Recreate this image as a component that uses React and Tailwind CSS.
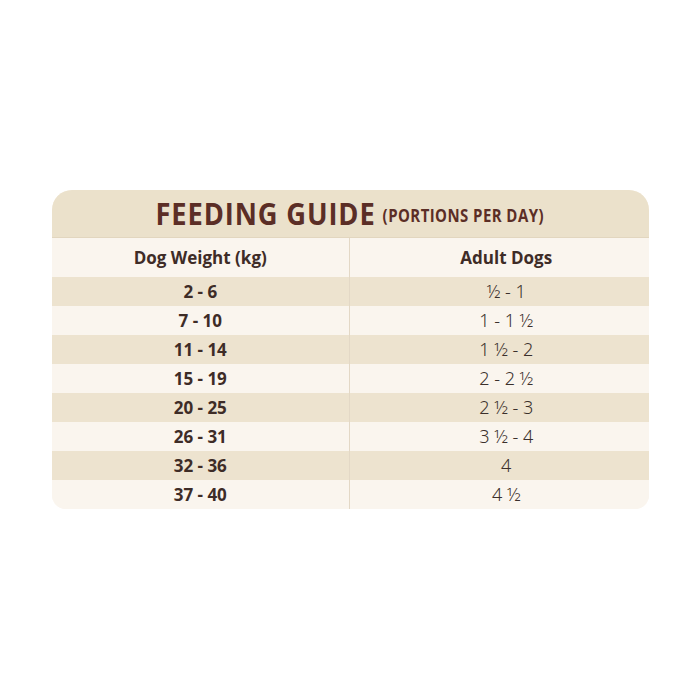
import React from 'react';

const ROWS = [
  ['2 - 6', '½ - 1'],
  ['7 - 10', '1 - 1 ½'],
  ['11 - 14', '1 ½ - 2'],
  ['15 - 19', '2 - 2 ½'],
  ['20 - 25', '2 ½ - 3'],
  ['26 - 31', '3 ½ - 4'],
  ['32 - 36', '4'],
  ['37 - 40', '4 ½'],
];

const BOLD_FONT = { fontFamily: "'Open Sans', sans-serif" };

export default function App() {
  return (
    <div className="min-h-[700px] bg-white flex justify-center pt-[190px]">
      <div className="w-[597px] h-fit rounded-t-[20px] rounded-b-[14px] overflow-hidden bg-[#faf5ee]">
        {/* title band — condensed look via horizontal squeeze */}
        <div className="h-[48px] bg-[#ebe1cb] border-b border-[#e2d6bf] flex items-center justify-center text-[#5b2e26]"
          style={BOLD_FONT}>
          <div className="flex items-center gap-[8px] scale-x-[0.88]">
            <span className="text-[31px] font-bold tracking-[1px] leading-none">FEEDING GUIDE</span>
            <span className="text-[17px] font-bold tracking-[0.5px] leading-none mt-[4px]">(PORTIONS PER DAY)</span>
          </div>
        </div>

        {/* column headers */}
        <div className="grid grid-cols-2 h-[39px] text-[#3e2c27] text-[17px] font-bold" style={BOLD_FONT}>
          <div className="flex items-center justify-center border-r border-[#e3d8c6]">Dog Weight (kg)</div>
          <div className="flex items-center justify-center pl-[14px]">Adult Dogs</div>
        </div>

        {ROWS.map(([kg, portion], i) => (
          <div key={i} className={`grid grid-cols-2 h-[29px] ${i % 2 === 0 ? 'bg-[#ede3cf]' : 'bg-[#faf5ee]'}`}>
            <div className="flex items-center justify-center border-r border-[#e3d8c6] text-[17px] font-bold text-[#3e2c27]"
              style={BOLD_FONT}>{kg}</div>
            <div className="flex items-center justify-center pl-[14px] text-[18px] font-light text-[#3b302c]"
              style={{ fontFamily: "'Noto Sans', sans-serif" }}>{portion}</div>
          </div>
        ))}
      </div>
    </div>
  );
}
